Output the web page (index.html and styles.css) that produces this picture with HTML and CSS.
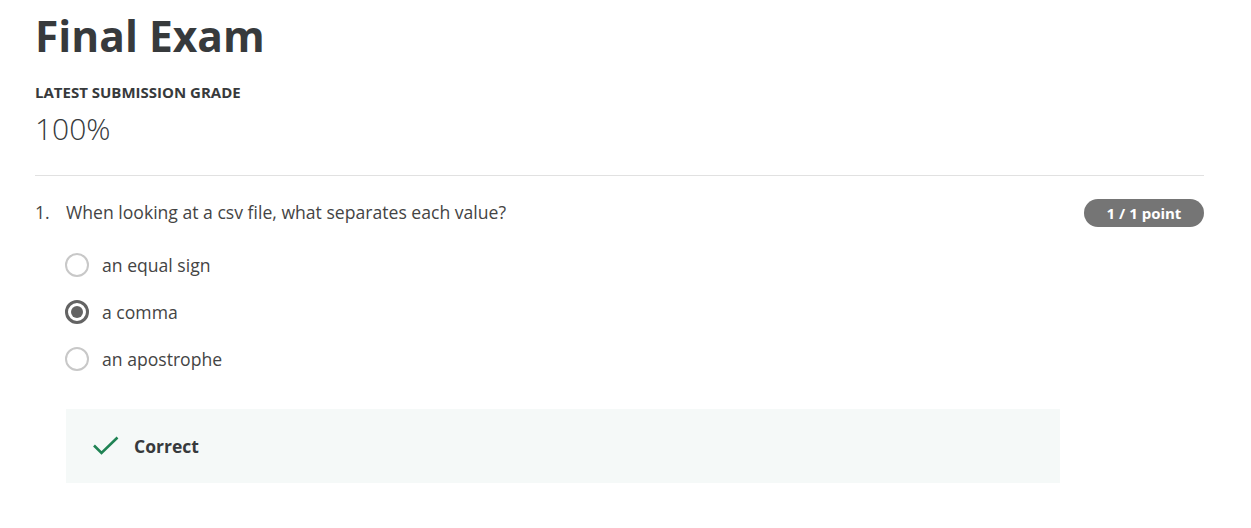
FILE: index.html
```html
<!DOCTYPE html>
<html lang="en">
<head>
<meta charset="utf-8">
<title>Final Exam</title>
<link rel="stylesheet" href="styles.css">
</head>
<body>
<main class="page">
  <h1 class="title">Final Exam</h1>
  <div class="grade-label">LATEST SUBMISSION GRADE</div>
  <div class="grade-value">100%</div>
  <hr class="divider">
  <section class="question">
    <div class="q-head">
      <span class="q-num">1.</span>
      <span class="q-text">When looking at a csv file, what separates each value?</span>
      <span class="badge">1 / 1 point</span>
    </div>
    <ul class="options">
      <li class="option"><span class="radio"></span><span class="opt-text">an equal sign</span></li>
      <li class="option"><span class="radio checked"></span><span class="opt-text">a comma</span></li>
      <li class="option"><span class="radio"></span><span class="opt-text">an apostrophe</span></li>
    </ul>
    <div class="feedback">
      <svg class="check" width="28" height="20" viewBox="0 0 28 20"><path d="M2 9.5 L9.5 17 L25.5 1.5" fill="none" stroke="#1f8354" stroke-width="2.6"/></svg>
      <span class="fb-text">Correct</span>
    </div>
  </section>
</main>
</body>
</html>
```
FILE: styles.css
```css
* { box-sizing: border-box; }
body {
  margin: 0;
  background: #fff;
  font-family: "Open Sans", "Noto Sans", sans-serif;
  color: #373a3c;
}
.page {
  width: 1169px;
  margin-left: 35px;
  padding-top: 10px;
}
.title {
  margin: 0;
  font-size: 42.5px;
  font-weight: 700;
  line-height: 52px;
  color: #373a3c;
}
.grade-label {
  margin-top: 20px;
  font-size: 15px;
  font-weight: 700;
  line-height: 20px;
  color: #373a3c;
}
.grade-value {
  margin-top: 9px;
  font-size: 30px;
  font-weight: 300;
  line-height: 36px;
  color: #373a3c;
}
.divider {
  margin: 28px 0 0;
  border: 0;
  border-top: 1px solid #e1e1e1;
}
.question {
  padding-top: 22px;
}
.q-head {
  display: flex;
  align-items: flex-start;
  font-size: 17.6px;
  line-height: 28px;
  color: #444;
}
.q-num {
  width: 31px;
  flex: none;
}
.q-text { flex: 1; }
.badge {
  flex: none;
  margin-top: 1px;
  width: 120px;
  height: 28px;
  border-radius: 14px;
  background: #757575;
  color: #fff;
  font-size: 15px;
  font-weight: 700;
  line-height: 28px;
  text-align: center;
}
.options {
  list-style: none;
  margin: 14px 0 0;
  padding: 0 0 0 30px;
}
.option {
  display: flex;
  align-items: center;
  height: 47px;
  font-size: 17.6px;
  color: #444;
}
.radio {
  flex: none;
  width: 24px;
  height: 24px;
  border-radius: 50%;
  border: 2px solid #c8c8c8;
  margin-right: 13px;
  display: flex;
  align-items: center;
  justify-content: center;
}
.radio.checked {
  border: 3px solid #636363;
}
.radio.checked::after {
  content: "";
  width: 12px;
  height: 12px;
  border-radius: 50%;
  background: #636363;
}
.feedback {
  margin: 27px 0 0 31px;
  width: 994px;
  height: 74px;
  background: #f5f9f8;
  display: flex;
  align-items: center;
  padding-left: 26px;
}
.check {
  flex: none;
  margin-right: 14px;
}
.fb-text {
  font-size: 17.5px;
  font-weight: 700;
  color: #373a3c;
}
```
